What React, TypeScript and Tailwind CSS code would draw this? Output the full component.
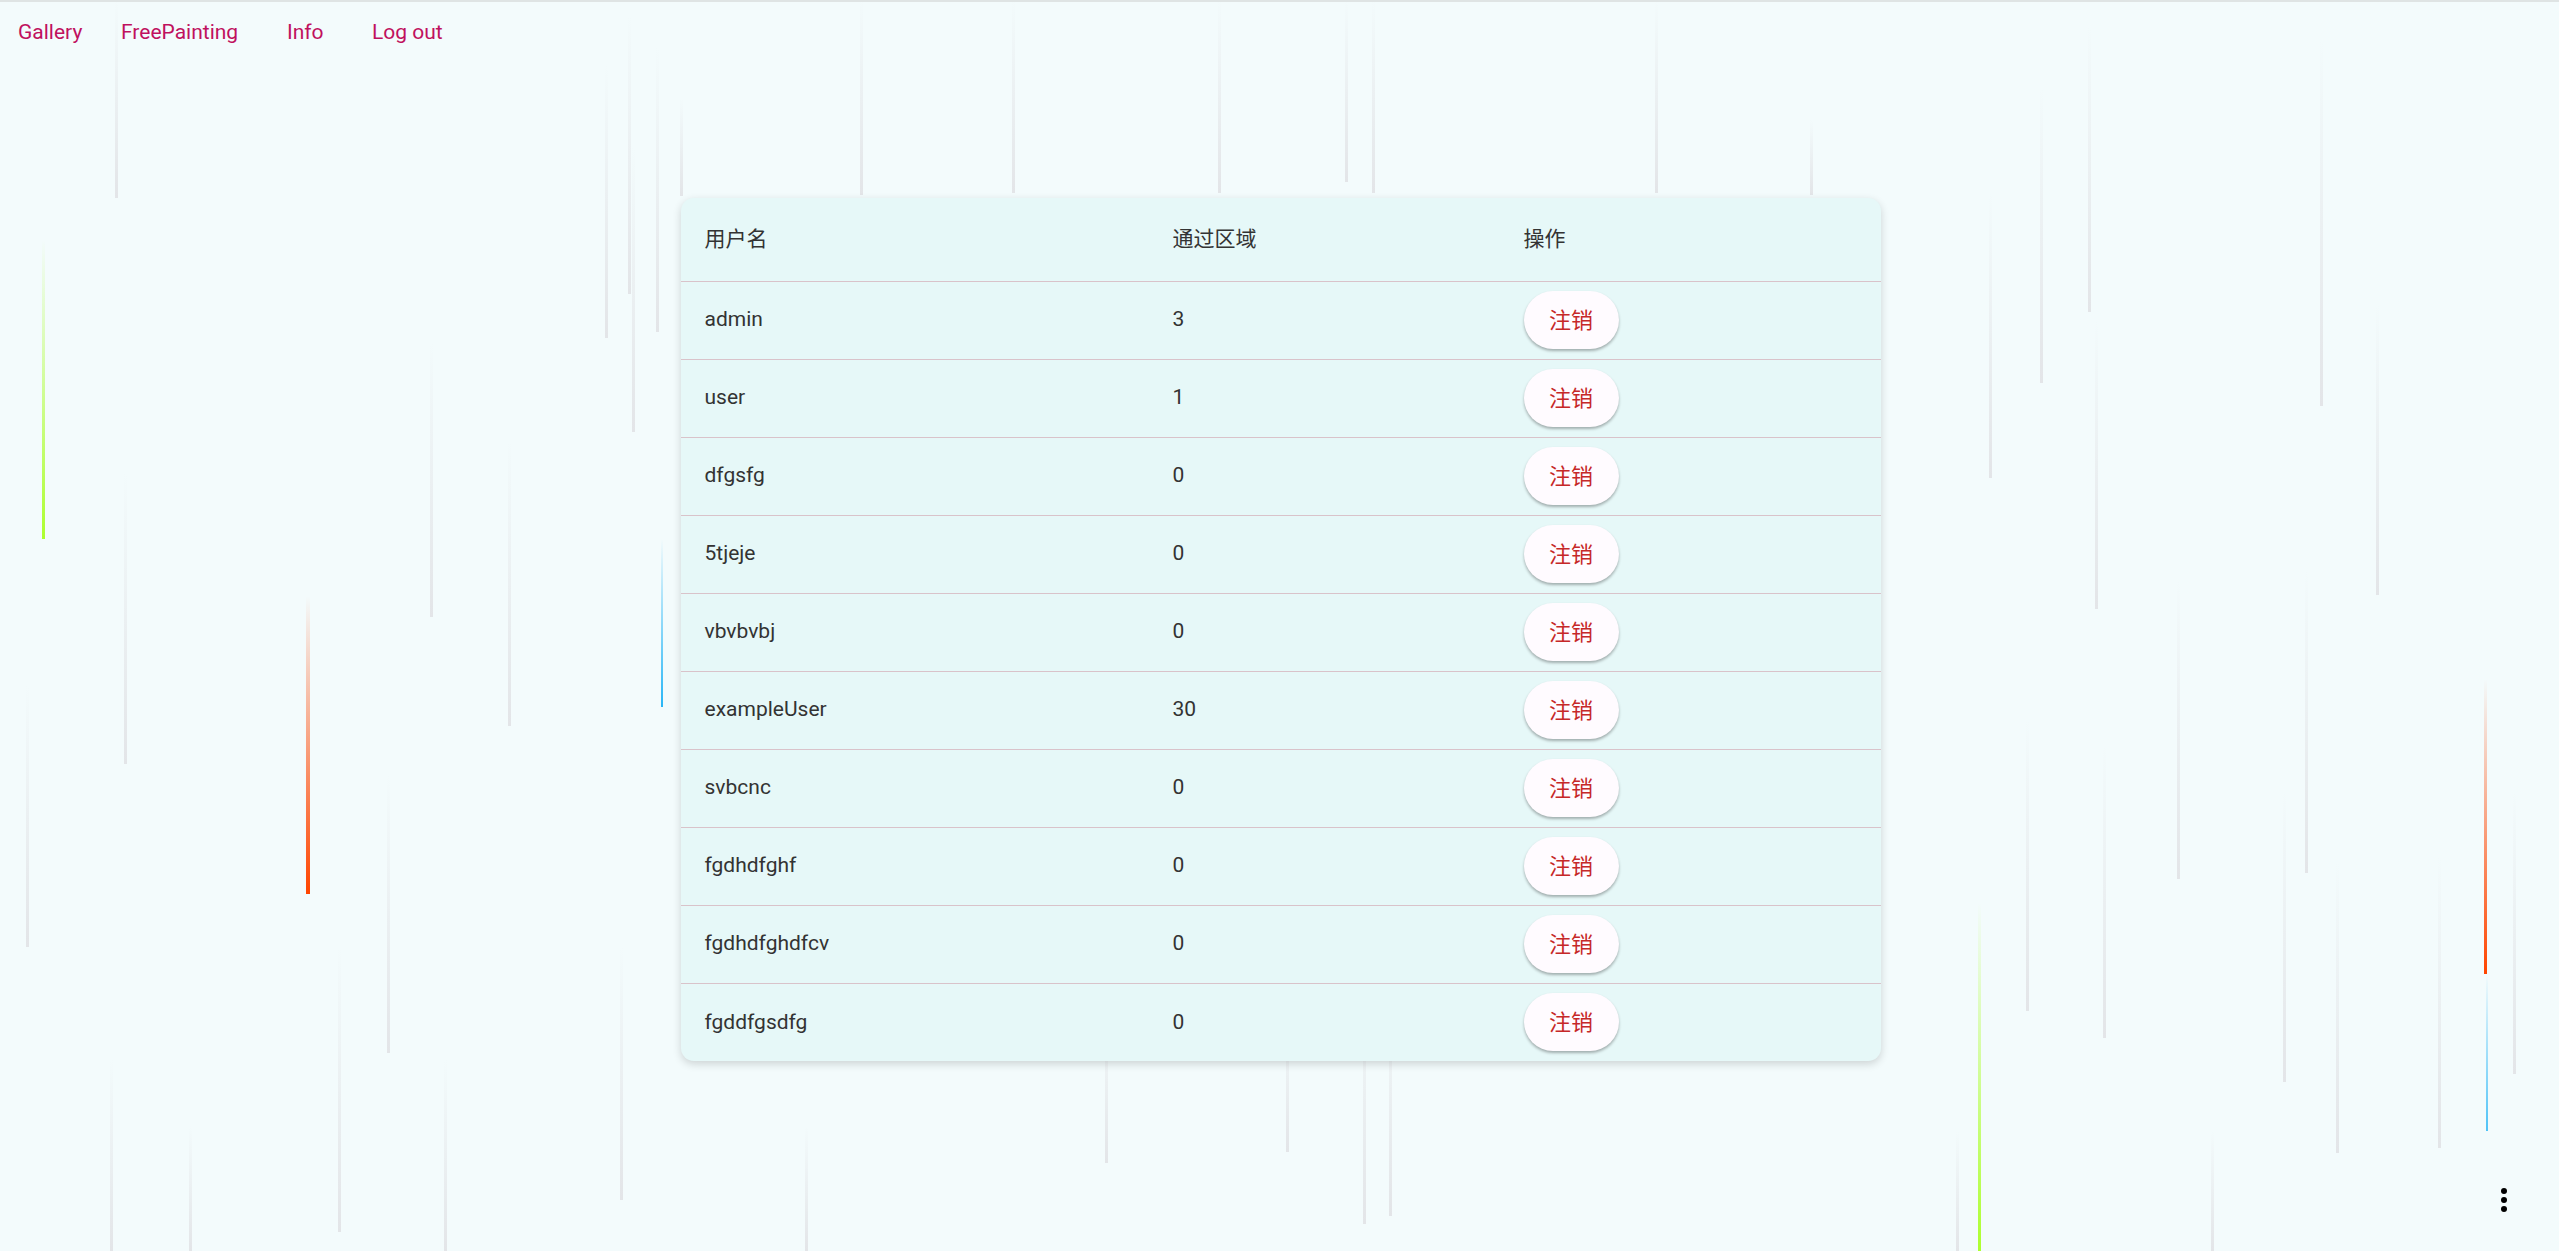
import React from "react";

type Streak = { x: number; y1: number; y2: number; color?: string; w?: number };

// falling streaks in the background canvas
const streaks: Streak[] = [
  { x: 115, y1: 0, y2: 198 },
  { x: 124, y1: 473, y2: 764 },
  { x: 26, y1: 685, y2: 947 },
  { x: 110, y1: 1060, y2: 1251 },
  { x: 189, y1: 1126, y2: 1251 },
  { x: 338, y1: 947, y2: 1232 },
  { x: 387, y1: 775, y2: 1053 },
  { x: 430, y1: 343, y2: 617 },
  { x: 444, y1: 1060, y2: 1251 },
  { x: 508, y1: 440, y2: 726 },
  { x: 605, y1: 65, y2: 338 },
  { x: 628, y1: 16, y2: 294 },
  { x: 632, y1: 147, y2: 432 },
  { x: 656, y1: 47, y2: 332 },
  { x: 680, y1: 98, y2: 196 },
  { x: 620, y1: 947, y2: 1200 },
  { x: 805, y1: 1126, y2: 1251 },
  { x: 860, y1: 0, y2: 195 },
  { x: 1012, y1: 0, y2: 193 },
  { x: 1218, y1: 0, y2: 193 },
  { x: 1105, y1: 1000, y2: 1163 },
  { x: 1286, y1: 1000, y2: 1152 },
  { x: 1345, y1: 0, y2: 182 },
  { x: 1363, y1: 960, y2: 1224 },
  { x: 1372, y1: 0, y2: 193 },
  { x: 1389, y1: 960, y2: 1216 },
  { x: 1655, y1: 0, y2: 193 },
  { x: 1810, y1: 120, y2: 195 },
  { x: 1989, y1: 192, y2: 478 },
  { x: 2040, y1: 89, y2: 383 },
  { x: 2088, y1: 27, y2: 312 },
  { x: 2095, y1: 321, y2: 609 },
  { x: 2320, y1: 40, y2: 406 },
  { x: 2376, y1: 304, y2: 595 },
  { x: 2177, y1: 580, y2: 879 },
  { x: 2305, y1: 571, y2: 873 },
  { x: 2026, y1: 720, y2: 1011 },
  { x: 2103, y1: 745, y2: 1038 },
  { x: 2283, y1: 791, y2: 1082 },
  { x: 2336, y1: 862, y2: 1153 },
  { x: 2438, y1: 857, y2: 1148 },
  { x: 2513, y1: 791, y2: 1074 },
  { x: 1956, y1: 1131, y2: 1251 },
  { x: 2211, y1: 1131, y2: 1251 },
  { x: 42, y1: 240, y2: 539, color: "#adff2f" },
  { x: 306, y1: 596, y2: 894, color: "#ff4500", w: 4 },
  { x: 661, y1: 539, y2: 707, color: "#29b6f6", w: 2 },
  { x: 2484, y1: 679, y2: 974, color: "#ff4500" },
  { x: 2486, y1: 974, y2: 1131, color: "#4fc3f7", w: 2 },
  { x: 1978, y1: 903, y2: 1251, color: "#adff2f" },
];

const users = [
  { name: "admin", zones: 3 },
  { name: "user", zones: 1 },
  { name: "dfgsfg", zones: 0 },
  { name: "5tjeje", zones: 0 },
  { name: "vbvbvbj", zones: 0 },
  { name: "exampleUser", zones: 30 },
  { name: "svbcnc", zones: 0 },
  { name: "fgdhdfghf", zones: 0 },
  { name: "fgdhdfghdfcv", zones: 0 },
  { name: "fgddfgsdfg", zones: 0 },
];

const font = {
  fontFamily: 'Roboto, "Noto Sans CJK SC", sans-serif',
};

export default function App() {
  return (
    <div
      className="relative min-h-[1251px] w-full overflow-hidden border-t-2 border-[#dfe4e4] bg-[#f3fbfc]"
      style={font}
    >
      <div className="pointer-events-none absolute inset-0">
        {streaks.map((s, i) => (
          <div
            key={i}
            className="absolute"
            style={{
              left: s.x,
              top: s.y1 - 2,
              width: s.w ?? 3,
              height: s.y2 - s.y1,
              background: `linear-gradient(to bottom, rgba(255,255,255,0), ${s.color ?? "#e3e5e8"})`,
            }}
          />
        ))}
      </div>

      <nav className="relative flex h-[62px] items-center pl-[18px] text-[21px] text-[#c0115e]">
        <a className="w-[103px] cursor-pointer">Gallery</a>
        <a className="w-[166px] cursor-pointer">FreePainting</a>
        <a className="w-[85px] cursor-pointer">Info</a>
        <a className="cursor-pointer">Log out</a>
      </nav>

      <div className="relative mx-auto mt-[134px] w-[1200px] translate-x-[1px] overflow-hidden rounded-[13px] bg-[#e6f8f8] shadow-[0_3px_8px_rgba(0,0,0,0.16)]">
        <table className="w-full border-collapse text-left text-[21px] text-[#333333]">
          <thead>
            <tr className="h-[83px] border-b border-[#d9c3ca]">
              <th className="w-[468px] pl-[24px] font-normal">用户名</th>
              <th className="w-[351px] pl-[24px] font-normal">通过区域</th>
              <th className="pl-[24px] font-normal">操作</th>
            </tr>
          </thead>
          <tbody>
            {users.map((u, i) => (
              <tr
                key={u.name}
                className={i < users.length - 1 ? "h-[78px] border-b border-[#d9c3ca]" : "h-[78px]"}
              >
                <td className="pl-[24px]">{u.name}</td>
                <td className="pl-[24px]">{u.zones}</td>
                <td className="pl-[24px]">
                  <button className="flex h-[58px] w-[95px] items-center justify-center rounded-full bg-[#fffbff] text-[22px] text-[#c62828] shadow-[0_2px_3px_rgba(0,0,0,0.3)]">
                    注销
                  </button>
                </td>
              </tr>
            ))}
          </tbody>
        </table>
      </div>

      <button className="absolute left-[2489px] top-[1183px] flex h-[30px] w-[30px] items-center justify-center">
        <svg width="30" height="30" viewBox="0 0 30 30">
          <circle cx="15" cy="6" r="3" fill="#000" />
          <circle cx="15" cy="15" r="3" fill="#000" />
          <circle cx="15" cy="24" r="3" fill="#000" />
        </svg>
      </button>
    </div>
  );
}
